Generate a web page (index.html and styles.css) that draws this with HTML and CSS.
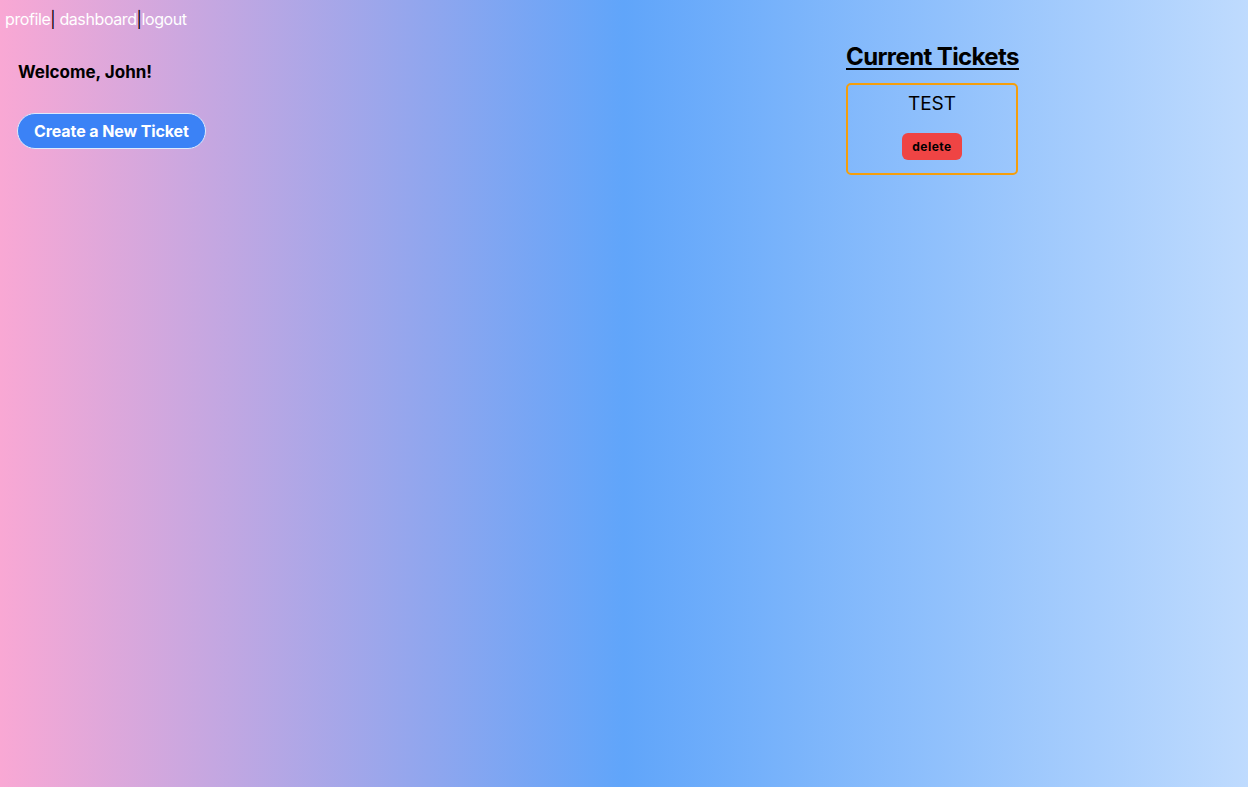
FILE: index.html
```html
<!DOCTYPE html>
<html>
<head>
<meta charset="utf-8">
<link rel="stylesheet" href="styles.css">
</head>
<body>
<div class="page">
  <nav class="nav"><a class="nav-link">profile</a><span class="sep">|</span> <a class="nav-link">dashboard</a><span class="sep">|</span><a class="nav-link">logout</a></nav>
  <main class="main">
    <section class="left">
      <h2 class="welcome">Welcome, John!</h2>
      <button class="create-btn">Create a New Ticket</button>
    </section>
    <section class="right">
      <h1 class="tickets-title">Current Tickets</h1>
      <div class="ticket">
        <div class="ticket-name">TEST</div>
        <button class="delete-btn">delete</button>
      </div>
    </section>
  </main>
</div>
</body>
</html>
```
FILE: styles.css
```css
* { box-sizing: border-box; }
html, body { margin: 0; padding: 0; height: 100%; }
body {
  font-family: Inter, "Liberation Sans", sans-serif;
  color: #000;
}
.page {
  min-height: 100vh;
  background: linear-gradient(to right, #f9a8d4, #60a5fa 50%, #bfdbfe);
}
.nav {
  padding: 9px 5px 0;
  font-size: 16px;
  line-height: 20px;
  color: #fff;
  letter-spacing: -0.4px;
}
.nav-link { color: #fff; }
.sep { color: #000; }
.main {
  display: grid;
  grid-template-columns: 1fr auto;
  padding: 0 230px 0 18px;
}
.left { padding-top: 32px; }
.welcome {
  margin: 0;
  font-size: 17px;
  font-weight: 700;
  line-height: 22px;
}
.create-btn {
  margin-top: 30px;
  margin-left: -1px;
  height: 36px;
  padding: 0 16px;
  border: 1px solid #dbeafe;
  border-radius: 18px;
  background: #3b82f6;
  color: #fff;
  font-family: inherit;
  font-size: 16px;
  font-weight: 700;
  letter-spacing: -0.1px;
}
.right { padding-top: 13px; width: 172px; }
.tickets-title {
  margin: 0;
  font-size: 24px;
  font-weight: 700;
  line-height: 30px;
  white-space: nowrap;
  letter-spacing: -0.6px;
  text-decoration: underline;
  text-decoration-thickness: 2px;
  text-underline-offset: 3px;
  text-align: center;
}
.ticket {
  margin-top: 11px;
  border: 2px solid #f59e0b;
  border-radius: 5px;
  height: 92px;
  display: flex;
  flex-direction: column;
  align-items: center;
  padding-top: 7px;
}
.ticket-name {
  font-size: 19px;
  line-height: 24px;
}
.delete-btn {
  margin-top: 17px;
  width: 60px;
  height: 27px;
  border: none;
  border-radius: 6px;
  background: #ef4444;
  color: #000;
  font-family: inherit;
  font-size: 12px;
  font-weight: 700;
  letter-spacing: 0.5px;
}
```
